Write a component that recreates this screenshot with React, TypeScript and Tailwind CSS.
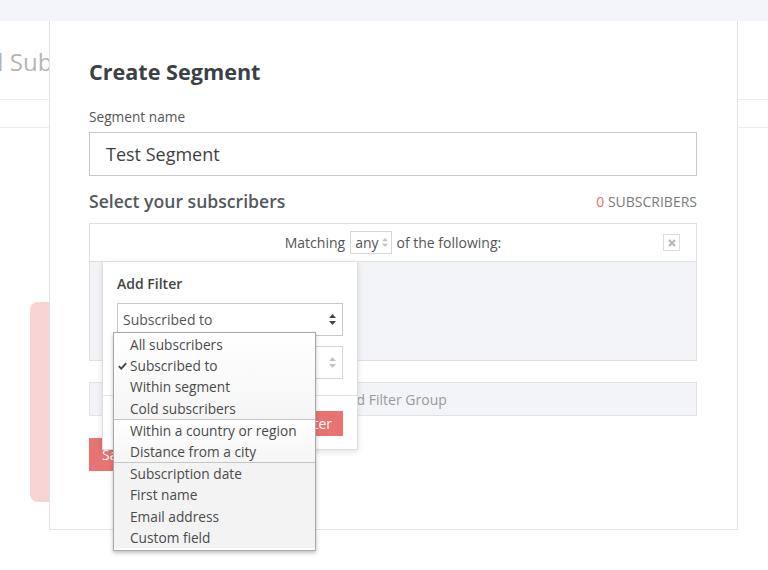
import React from 'react';

const font = { fontFamily: '"Open Sans", "Liberation Sans", sans-serif' };

function Arrows({ color = '#444' }: { color?: string }) {
  return (
    <svg width="7" height="11" viewBox="0 0 7 11">
      <path d="M3.5 0 L7 4 L0 4 Z" fill={color} />
      <path d="M3.5 11 L7 7 L0 7 Z" fill={color} />
    </svg>
  );
}

const groups = [
  ['All subscribers', 'Subscribed to', 'Within segment', 'Cold subscribers'],
  ['Within a country or region', 'Distance from a city'],
  ['Subscription date', 'First name', 'Email address', 'Custom field'],
];

function OptionList() {
  return (
    <div className="absolute left-[-5px] top-[28px] w-[203px] border border-[#a9a9a9] bg-white shadow-[0_2px_4px_rgba(0,0,0,0.25)] pt-[1px] pb-[2px] z-20">
      {groups.map((group, gi) => (
        <div
          key={gi}
          className={`${gi > 0 ? 'border-t border-[#c6c6c6]' : ''} ${
            gi === 2 ? 'bg-[#f3f3f3]' : 'bg-gradient-to-b from-white to-[#f5f5f5]'
          }`}
        >
          {group.map(item => (
            <div key={item} className="relative h-[21.2px] leading-[21.2px] pl-[16px] text-[13.7px] text-[#4a4a4a] whitespace-nowrap">
              {item === 'Subscribed to' && (
                <svg className="absolute left-[4px] top-[7px]" width="9" height="8" viewBox="0 0 9 8">
                  <path d="M0.8 4.2 L3.3 6.7 L8.2 1.2" stroke="#4a4a4a" strokeWidth="1.9" fill="none" />
                </svg>
              )}
              {item}
            </div>
          ))}
        </div>
      ))}
    </div>
  );
}

function AddFilterPopover() {
  return (
    <div className="absolute left-[13px] top-[38px] w-[256px] bg-white border border-[#dedede] shadow-[0_2px_6px_rgba(0,0,0,0.12)] z-10">
      <div className="px-[14px] pt-[12px] pb-[16px]">
        <div className="text-[14px] leading-[19px] font-semibold text-[#444]">Add Filter</div>
        <div className="relative mt-[10px] h-[33px] border border-[#c9c9c9] flex items-center justify-between pl-[5px] pr-[6px] text-[14px] text-[#555]">
          <span>Subscribed to</span>
          <Arrows color="#444" />
          <OptionList />
        </div>
        <div className="mt-[10px] h-[33px] border border-[#d6d6d6] flex items-center justify-end pr-[6px]">
          <Arrows color="#c4c4c4" />
        </div>
      </div>
      <div className="border-t border-[#e2e2e2] px-[14px] pt-[15px] pb-[13px] flex justify-end">
        <button className="h-[25px] px-[11px] bg-[#e97373] text-white text-[14px] leading-[25px]">Add Filter</button>
      </div>
    </div>
  );
}

export default function App() {
  return (
    <div className="relative w-[768px] h-[570px] overflow-hidden bg-white" style={font}>
      <div className="h-[21px] bg-[#f4f5f8]" />
      <div className="h-[79px] border-b border-[#ededed] pt-[24px] overflow-hidden">
        <div className="-ml-[41px] text-[24px] leading-[33px] text-[#b4b4b4] whitespace-nowrap">Add Subscribers</div>
      </div>
      <div className="h-[28px] border-b border-[#ededed]" />
      <div className="pl-[30px] pt-[174px]">
        <div className="w-[40px] h-[200px] rounded-[8px] bg-[#f7d3d3]" />
      </div>

      <div className="absolute left-[49px] top-[21px] w-[689px] h-[509px] bg-white border border-t-0 border-[#e3e3e3] pl-[39px] pr-[40px] pt-[36px]">
        <h1 className="text-[21.6px] leading-[30px] font-bold text-[#3c4146]">Create Segment</h1>
        <div className="mt-[21px] text-[13.7px] leading-[18px] text-[#555]">Segment name</div>
        <div className="mt-[6px] h-[44px] border border-[#c9c9c9] flex items-center pl-[16px] text-[18px] text-[#3f3f3f]">
          Test Segment
        </div>

        <div className="mt-[13px] h-[24px] flex items-center justify-between">
          <span className="text-[17.6px] leading-[24px] font-semibold text-[#54595e]">Select your subscribers</span>
          <span className="text-[14px] text-[#7a7a7a]">
            <span className="text-[#e86a6a]">0</span> SUBSCRIBERS
          </span>
        </div>

        <div className="relative mt-[10px]">
          <div className="border border-[#e0e0e0]">
            <div className="relative h-[37px] flex items-center justify-center text-[14px] text-[#555] bg-white">
              <span>Matching</span>
              <span className="mx-[5px] h-[23px] border border-[#d6d6d6] flex items-center gap-[3px] pl-[4px] pr-[3px]">
                any
                <svg width="6" height="9" viewBox="0 0 6 9">
                  <path d="M3 0 L6 3.3 L0 3.3 Z" fill="#c4c4c4" />
                  <path d="M3 9 L6 5.7 L0 5.7 Z" fill="#c4c4c4" />
                </svg>
              </span>
              <span>of the following:</span>
              <span className="absolute right-[16px] top-[10px] w-[17px] h-[17px] border border-[#dcdcdc] flex items-center justify-center">
                <svg width="8" height="8" viewBox="0 0 8 8">
                  <path d="M1 1 L7 7 M7 1 L1 7" stroke="#b5b5b5" strokeWidth="2" />
                </svg>
              </span>
            </div>
            <div className="h-[99px] border-t border-[#e0e0e0] bg-[#f3f4f7]" />
          </div>
          <AddFilterPopover />
        </div>

        <div className="mt-[21px] h-[34px] border border-[#e3e3e3] bg-[#f3f4f7] flex items-center justify-center text-[14px] text-[#9a9a9a]">
          Add Filter Group
        </div>

        <button className="mt-[22px] h-[33px] px-[13px] bg-[#e97373] text-white text-[14px]">Save Segment</button>
      </div>
    </div>
  );
}
